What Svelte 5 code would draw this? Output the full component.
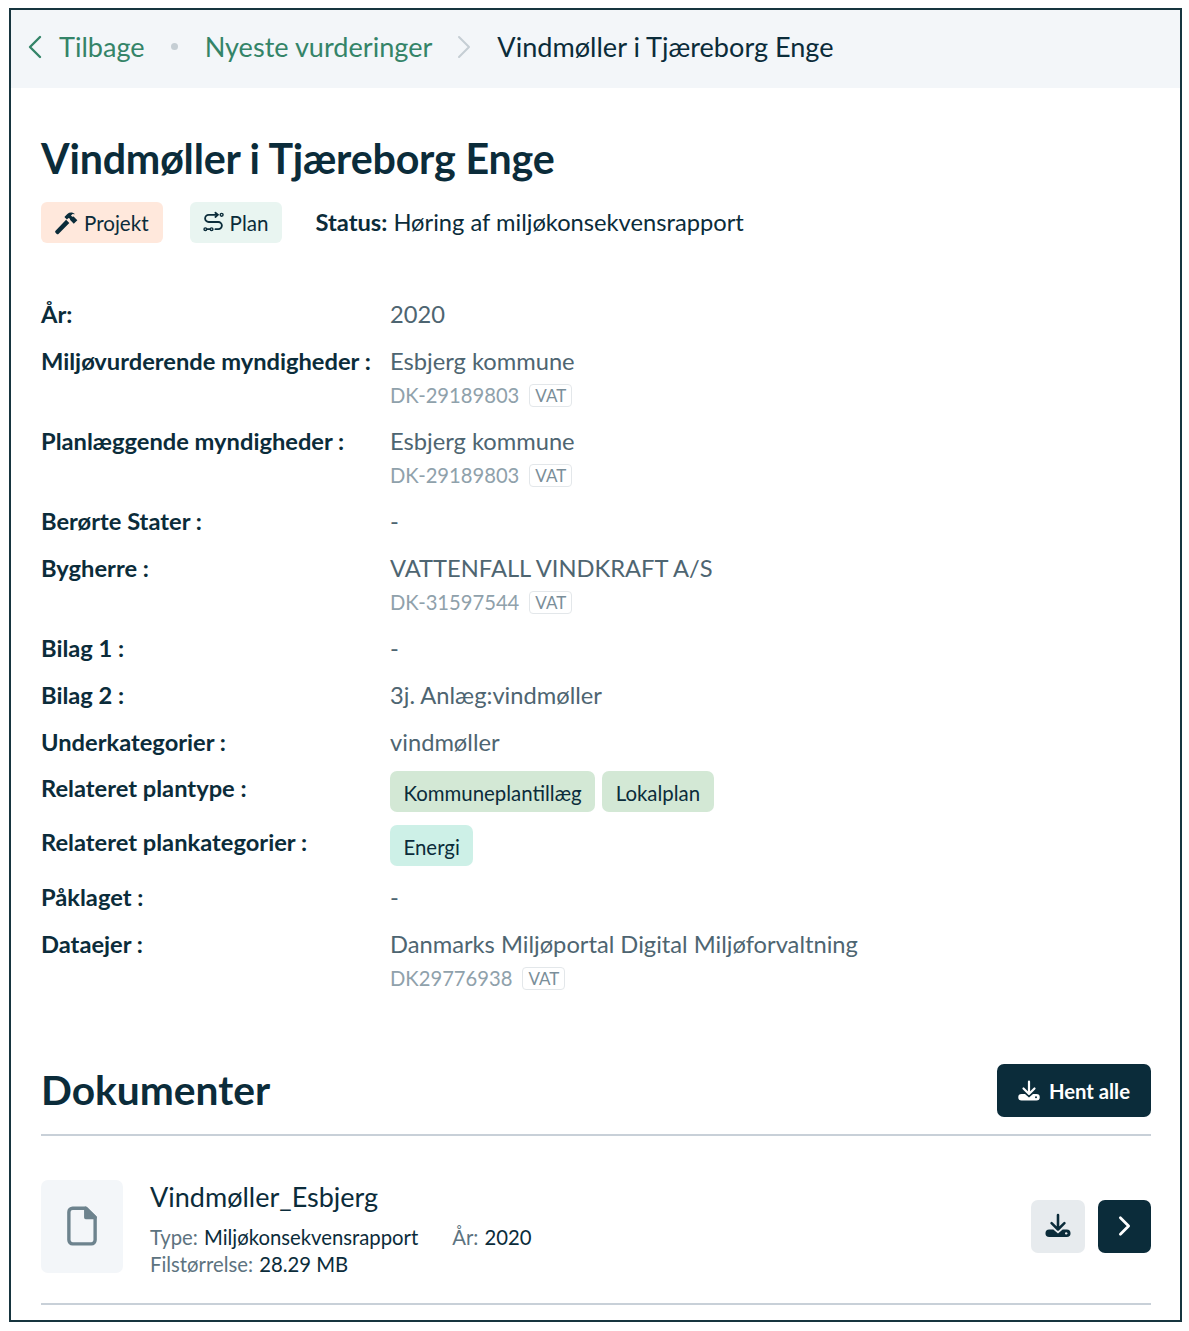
<script>
  const rows = [
    { label: 'År:', value: '2020' },
    { label: 'Miljøvurderende myndigheder :', value: 'Esbjerg kommune', vat: 'DK-29189803' },
    { label: 'Planlæggende myndigheder :', value: 'Esbjerg kommune', vat: 'DK-29189803' },
    { label: 'Berørte Stater :', value: '-' },
    { label: 'Bygherre :', value: 'VATTENFALL VINDKRAFT A/S', vat: 'DK-31597544' },
    { label: 'Bilag 1 :', value: '-' },
    { label: 'Bilag 2 :', value: '3j. Anlæg:vindmøller' },
    { label: 'Underkategorier :', value: 'vindmøller' },
    { label: 'Relateret plantype :', chips: ['Kommuneplantillæg', 'Lokalplan'], tone: 'green' },
    { label: 'Relateret plankategorier :', chips: ['Energi'], tone: 'teal' },
    { label: 'Påklaget :', value: '-' },
    { label: 'Dataejer :', value: 'Danmarks Miljøportal Digital Miljøforvaltning', vat: 'DK29776938' },
  ];
</script>

<div class="frame">
  <nav class="crumbs">
    <svg class="back" viewBox="0 0 14 24" width="14" height="24" fill="none" stroke="currentColor" stroke-width="2.4" stroke-linecap="round" stroke-linejoin="round"><path d="M12 2 2 12l10 10" /></svg>
    <a href="#top">Tilbage</a>
    <span class="dot"></span>
    <a href="#top">Nyeste vurderinger</a>
    <svg class="sep" viewBox="0 0 14 24" width="14" height="24" fill="none" stroke="currentColor" stroke-width="2" stroke-linecap="round" stroke-linejoin="round"><path d="M2 2l10 10L2 22" /></svg>
    <span class="current">Vindmøller i Tjæreborg Enge</span>
  </nav>

  <main>
    <h1>Vindmøller i Tjæreborg Enge</h1>

    <div class="meta">
      <span class="tag project">
        <svg viewBox="0 0 24 24" width="25" height="25" fill="currentColor"><path d="M1.500 19.800 11.600 9.300l3.100 3.100L4.500 22.700a1.500 1.500 0 0 1-2.100 0l-.9-.9a1.400 1.400 0 0 1 0-2z" /><path d="M10 6.800 12.800 3.800c2.300-1.900 5.200-1.700 7.400.2l-2.400-.2-1.500 1.500 1.200 1.200 1.300-.3 3.600 3.600-3.400 3.400-3.500-3.500-.2-1.300-1.300-.8-1.700 1.500z" /></svg>
        Projekt
      </span>
      <span class="tag plan">
        <svg viewBox="0 0 24 24" width="23" height="23" fill="none" stroke="currentColor" stroke-width="1.900" stroke-linecap="round"><path d="M16 4H7a3.400 3.400 0 0 0 0 7.500h10a3.400 3.400 0 0 1 0 7.500H14" /><path d="M14 1.800 16.500 4 14 6.200" /><circle cx="20.500" cy="4" r="1.500" stroke-width="1.500" /><circle cx="3.500" cy="19" r="1.400" stroke-width="1.500" /><circle cx="10" cy="19" r="1.400" stroke-width="1.500" /><path d="M5 19h3.500" /></svg>
        Plan
      </span>
      <span class="status"><b>Status:</b> Høring af miljøkonsekvensrapport</span>
    </div>

    <div class="rows">
      {#each rows as row}
        <div class="row" class:chipped={row.chips}>
          <div class="label">{row.label}</div>
          <div class="value">
            {#if row.chips}
              <div class="chips">
                {#each row.chips as chip}
                  <span class="chip {row.tone}">{chip}</span>
                {/each}
              </div>
            {:else}
              {row.value}
            {/if}
            {#if row.vat}
              <div class="vat">{row.vat}<span class="vat-tag">VAT</span></div>
            {/if}
          </div>
        </div>
      {/each}
    </div>

    <div class="docs-head">
      <h2>Dokumenter</h2>
      <button class="btn-dark hent">
        <svg viewBox="0 0 24 24" width="24" height="24" fill="currentColor"><path d="M12 2.500v12M6.500 9.500l5.500 5.500 5.500-5.500" fill="none" stroke="currentColor" stroke-width="2.200" stroke-linecap="round" stroke-linejoin="round" /><path d="M4.500 15H8l4 3.500 4-3.500h3.500a3.200 3.200 0 0 1 0 6.500h-15a3.200 3.200 0 0 1 0-6.500z" /><circle cx="19" cy="18.300" r="1" fill="#0b2c3a" /></svg>
        Hent alle
      </button>
    </div>

    <div class="doc">
      <div class="file">
        <svg viewBox="0 0 32 42" width="30" height="40" fill="none" stroke="#6d838e" stroke-width="3.600" stroke-linejoin="round"><path d="M6 2h14l10 10v24a4 4 0 0 1-4 4H6a4 4 0 0 1-4-4V6a4 4 0 0 1 4-4z" /><path d="M20 2l10 10H20z" fill="#6d838e" /></svg>
      </div>
      <div class="doc-body">
        <div class="doc-name">Vindmøller_Esbjerg</div>
        <div class="doc-line"><span class="k">Type:</span> Miljøkonsekvensrapport<span class="k year">År:</span> 2020</div>
        <div class="doc-line"><span class="k">Filstørrelse:</span> 28.29 MB</div>
      </div>
      <div class="actions">
        <button class="icon-btn light" aria-label="Hent">
          <svg viewBox="0 0 24 24" width="28" height="28" fill="currentColor"><path d="M12 2.500v12M6.500 9.500l5.500 5.500 5.500-5.500" fill="none" stroke="currentColor" stroke-width="2.200" stroke-linecap="round" stroke-linejoin="round" /><path d="M4.500 15H8l4 3.500 4-3.500h3.500a3.200 3.200 0 0 1 0 6.500h-15a3.200 3.200 0 0 1 0-6.500z" /><circle cx="19" cy="18.300" r="1" fill="#e7ebee" /></svg>
        </button>
        <button class="icon-btn dark" aria-label="Åbn">
          <svg viewBox="0 0 14 24" width="13" height="22" fill="none" stroke="currentColor" stroke-width="3" stroke-linecap="round" stroke-linejoin="round"><path d="M2.500 3l9 9-9 9" /></svg>
        </button>
      </div>
    </div>
  </main>
</div>

<style>
  :global(body) {
    background: #fff;
    font-family: Lato, "Liberation Sans", sans-serif;
    color: #0b2c3a;
  }

  .frame {
    box-sizing: border-box;
    width: 1173px;
    height: 1314px;
    margin: 8px 0 0 9px;
    border: 2px solid #17353f;
    overflow: hidden;
  }

  .crumbs {
    display: flex;
    align-items: center;
    height: 78px;
    box-sizing: border-box;
    padding: 0 0 5px 17px;
    background: #f3f6f9;
    font-size: 27.100px;
  }

  .crumbs a {
    color: #348468;
    text-decoration: none;
  }

  .back {
    color: #348468;
    margin-right: 17px;
  }

  .dot {
    width: 7px;
    height: 7px;
    margin: 0 27px 0 26px;
    border-radius: 50%;
    background: #c5ced4;
  }

  .sep {
    color: #c5ced4;
    margin: 0 26px 0 25px;
  }

  .current {
    color: #0b2c3a;
  }

  main {
    padding: 0 29px 0 30px;
  }

  h1 {
    margin: 45px 0 0;
    font-size: 41.200px;
    line-height: 50px;
    font-weight: 700;
    letter-spacing: -0.2px;
  }

  .meta {
    display: flex;
    align-items: center;
    margin-top: 19px;
    font-size: 23.700px;
  }

  .tag {
    display: inline-flex;
    align-items: center;
    gap: 5px;
    height: 41px;
    box-sizing: border-box;
    border-radius: 6px;
    font-size: 20.600px;
  }

  .project {
    padding: 0 14px 0 13px;
    background: #ffe8dc;
    margin-right: 27px;
  }

  .plan {
    padding: 0 13px 0 12px;
    background: #e9f5f1;
    margin-right: 34px;
  }

  .status {
    padding-bottom: 2px;
  }

  .status b {
    font-weight: 700;
  }

  .rows {
    display: flex;
    flex-direction: column;
    gap: 17px;
    margin-top: 56px;
  }

  .row {
    display: grid;
    grid-template-columns: 349px 1fr;
    font-size: 23.700px;
    line-height: 30px;
  }

  .label {
    font-weight: 700;
  }

  .value {
    color: #4e6571;
  }

  .chipped .label {
    padding-top: 2px;
  }

  .chipped {
    margin-top: -3px;
  }

  .chipped + .chipped {
    margin-top: -4px;
  }

  .chipped + .row:not(.chipped) {
    margin-top: -1px;
  }

  .chips {
    display: flex;
    gap: 7px;
  }

  .chip {
    height: 41px;
    padding: 0 13.500px;
    border-radius: 7px;
    font-size: 20.400px;
    line-height: 44px;
    color: #0b2c3a;
  }

  .green {
    background: #d3e8d5;
  }

  .teal {
    background: #cdf0e7;
  }

  .vat {
    display: flex;
    align-items: center;
    margin: 4px 0 -1px;
    font-size: 20.200px;
    line-height: 30px;
    color: #8fa1ab;
  }

  .vat-tag {
    margin-left: 10px;
    padding: 0 5px;
    border: 1px solid #e3e7ea;
    border-radius: 4px;
    font-size: 17px;
    line-height: 21px;
    color: #7a8e99;
  }

  .docs-head {
    display: flex;
    align-items: center;
    justify-content: space-between;
    margin-top: 71px;
    padding-bottom: 17px;
    border-bottom: 2px solid #c8d0d8;
  }

  h2 {
    margin: 0;
    font-size: 40.700px;
    line-height: 54px;
    font-weight: 700;
  }

  button {
    border: 0;
    font-family: inherit;
    cursor: pointer;
  }

  .btn-dark {
    display: inline-flex;
    align-items: center;
    align-self: flex-end;
    gap: 8px;
    height: 53px;
    padding: 0 21px 0 20px;
    border-radius: 7px;
    background: #0b2c3a;
    color: #fff;
    font-size: 20.300px;
    font-weight: 700;
  }

  .doc {
    display: flex;
    align-items: center;
    height: 154px;
    padding-top: 13px;
    border-bottom: 2px solid #c8d0d8;
  }

  .file {
    display: flex;
    align-items: center;
    justify-content: center;
    width: 82px;
    height: 93px;
    margin-right: 27px;
    border-radius: 7px;
    background: #f3f6f9;
  }

  .doc-body {
    flex: 1;
    padding-top: 5px;
    font-size: 20.300px;
  }

  .doc-name {
    font-size: 27px;
    line-height: 34px;
    margin-bottom: 10px;
  }

  .doc-line {
    line-height: 27px;
  }

  .k {
    margin-right: 1px;
    color: #5d7380;
  }

  .year {
    margin-left: 34px;
  }

  .actions {
    display: flex;
    gap: 13px;
  }

  .icon-btn {
    display: flex;
    align-items: center;
    justify-content: center;
    width: 53px;
    height: 53px;
    padding: 0;
    border-radius: 7px;
  }

  .light {
    width: 54px;
    background: #e7ebee;
    color: #0b2c3a;
  }

  .dark {
    background: #0b2c3a;
    color: #fff;
  }
</style>
